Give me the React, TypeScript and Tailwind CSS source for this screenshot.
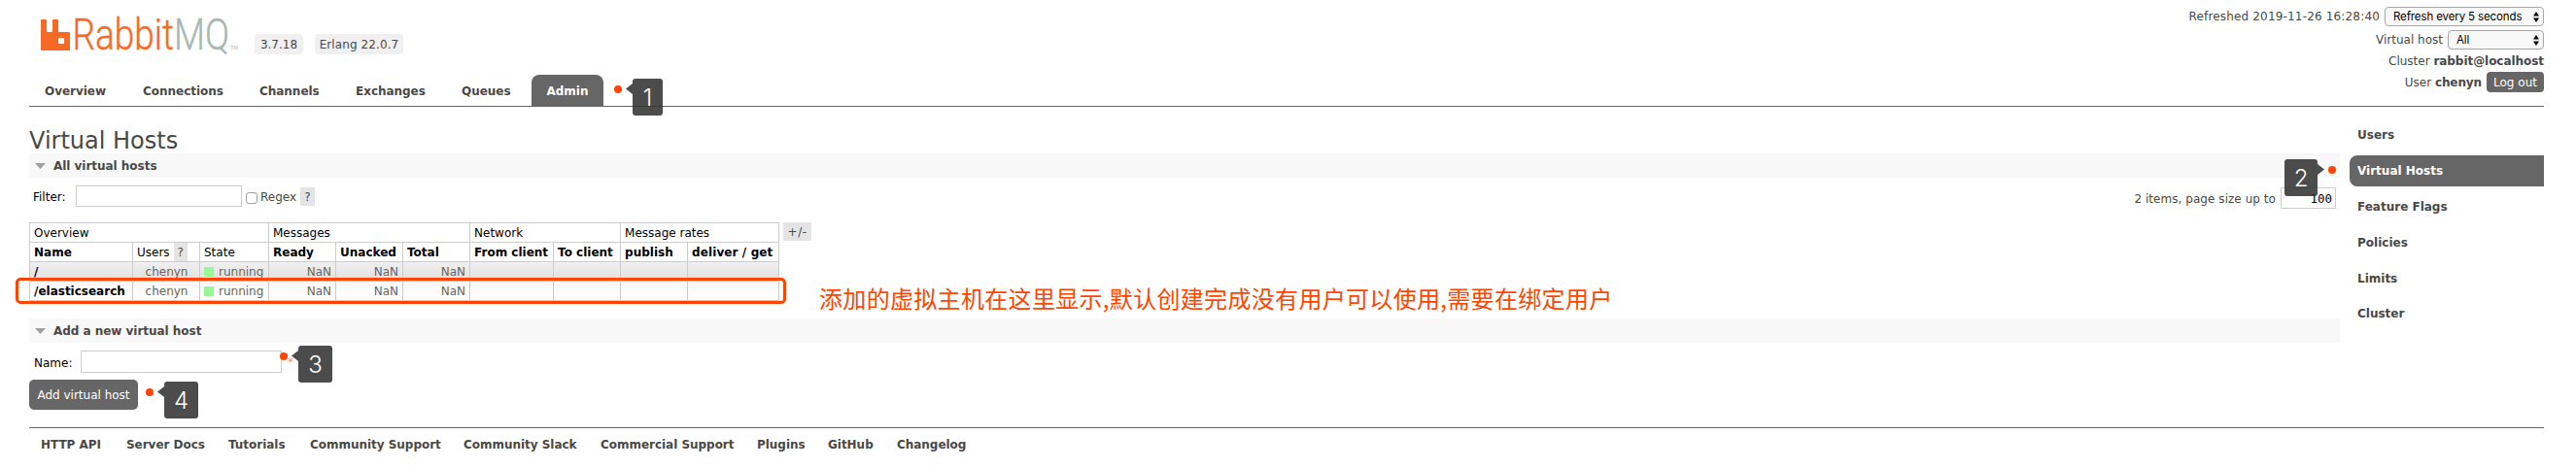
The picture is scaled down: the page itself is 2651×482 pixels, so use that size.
import React from "react";

const bold = "font-bold tracking-[-0.03px] text-[#484848]";

const tabs: [string, string][] = [
  ["Overview", "w-[63px]"],
  ["Connections", "w-[82px]"],
  ["Channels", "w-[61px]"],
  ["Exchanges", "w-[71px]"],
  ["Queues", "w-[50px]"],
];

const side = ["Users", "Virtual Hosts", "Feature Flags", "Policies", "Limits", "Cluster"];

const footer: [string, string][] = [
  ["HTTP API", "w-[88px]"],
  ["Server Docs", "w-[105px]"],
  ["Tutorials", "w-[84px]"],
  ["Community Support", "w-[158px]"],
  ["Community Slack", "w-[141px]"],
  ["Commercial Support", "w-[161px]"],
  ["Plugins", "w-[73px]"],
  ["GitHub", "w-[71px]"],
  ["Changelog", "w-[80px]"],
];

function Logo() {
  return (
    <svg className="block h-[40px] w-[210px] overflow-visible" viewBox="0 0 210 40">
      <path
        d="M1 4h4q1 0 1 1v11q0 1 1 1h4q1 0 1-1V5q0-1 1-1h4q1 0 1 1v11q0 1 1 1h10q1 0 1 1v17q0 1-1 1H1q-1 0-1-1V5q0-1 1-1zM19 23q-1 0-1 1v4q0 1 1 1h4q1 0 1-1v-4q0-1-1-1z"
        fill="#f66a26"
        fillRule="evenodd"
      />
      <text x="32.5" y="35.2" fontFamily="Roboto, sans-serif" fontWeight="300" fontSize="45" strokeWidth="0.4" textLength="161.5" lengthAdjust="spacingAndGlyphs">
        <tspan fill="#f66a26" stroke="#f66a26">Rabbit</tspan>
        <tspan fill="#a9b7b1" stroke="#a9b7b1">MQ</tspan>
      </text>
      <text x="195" y="35" fontSize="5.5" fill="#a9b7b1" fontFamily="Liberation Sans, sans-serif">TM</text>
    </svg>
  );
}

function Select({ label, width }: { label: string; width: string }) {
  return (
    <span className={`flex h-[20px] items-center justify-between rounded-[4px] border border-[#a6a6a6] bg-[#f8f8f8] pr-[4px] pl-[8px] font-[Inter,sans-serif] text-[11.5px] tracking-[-0.12px] text-black ${width}`}>
      {label}
      <svg className="h-[11px] w-[6px]" viewBox="0 0 6 11">
        <path d="M3 0l3 4.5H0zM3 11L0 6.5h6z" fill="#000" />
      </svg>
    </span>
  );
}

function Section({ title }: { title: string }) {
  return (
    <div className={`flex h-[25px] items-center bg-[#f8f8f8] pl-[6px] ${bold}`}>
      <svg className="mr-[8px] h-[6px] w-[11px]" viewBox="0 0 11 6">
        <path d="M0 0h11L5.5 6z" fill="#a0a0a0" />
      </svg>
      {title}
    </div>
  );
}

function Callout({ n, pos, dot, flip }: { n: string; pos: string; dot: string; flip?: boolean }) {
  return (
    <>
      <i className={`absolute h-[8px] w-[8px] rounded-full bg-[#ff4500] ${dot}`} />
      <div className={`absolute flex h-[38px] items-center justify-center rounded-[3px] bg-[#333]/88 pt-px font-[Inter,sans-serif] text-[24px] font-light text-white ${pos}`}>
        {n}
        <svg className={`absolute top-[5px] h-[11px] w-[7px] ${flip ? "-right-[7px] -scale-x-100" : "-left-[7px]"}`} viewBox="0 0 7 11">
          <path d="M7 0v11L0 5.5z" fill="#333" fillOpacity=".88" />
        </svg>
      </div>
    </>
  );
}

const cell = "border border-[#ccc] px-[4px] py-0 h-[20px] whitespace-nowrap overflow-hidden";

function Row({ name, tone }: { name: string; tone: string }) {
  return (
    <tr className={`text-[#666] ${tone}`}>
      <td className={`${cell} font-bold text-black`}>{name}</td>
      <td className={`${cell} text-center`}><span className="pl-[1px]">chenyn</span></td>
      <td className={cell}>
        <span className="flex items-center">
          <i className="mr-[5px] h-[10px] w-[10px] bg-[#98f898]" />
          running
        </span>
      </td>
      <td className={`${cell} text-right`}>NaN</td>
      <td className={`${cell} text-right`}>NaN</td>
      <td className={`${cell} text-right`}>NaN</td>
      <td className={cell} />
      <td className={cell} />
      <td className={cell} />
      <td className={cell} />
    </tr>
  );
}

export default function App() {
  return (
    <div className="relative h-[482px] w-[2651px] overflow-hidden bg-white font-[DejaVu_Sans,Verdana,sans-serif] text-[12px] leading-[16px] whitespace-nowrap text-[#484848]">
      <header className="mr-[33px] ml-[30px] flex h-[110px] justify-between border-b border-[#666]">
        <div className="flex flex-col justify-between">
          <div className="flex pt-[16px] pl-[12px]">
            <Logo />
            <span className="mt-[19px] ml-[10px] flex h-[21px] w-[50px] items-center justify-center rounded-[4px] bg-[#f0f0f0]">3.7.18</span>
            <span className="mt-[19px] ml-[12px] flex h-[21px] w-[91px] items-center justify-center rounded-[4px] bg-[#f0f0f0] tracking-[0.1px]">Erlang 22.0.7</span>
          </div>
          <nav className={`flex h-[32px] gap-[6px] ${bold}`}>
            {tabs.map(([t, w]) => (
              <span key={t} className="px-[16px] pt-[9px]">
                <span className={`block ${w}`}>{t}</span>
              </span>
            ))}
            <span className="w-[74px] rounded-t-[8px] bg-[#666] pt-[9px] text-center text-white">Admin</span>
          </nav>
        </div>
        <div className="flex flex-col items-end pt-[7px]">
          <div className="flex items-center gap-[5px]"><span className="tracking-[0.17px]">Refreshed 2019-11-26 16:28:40</span><Select label="Refresh every 5 seconds" width="w-[164px]" /></div>
          <div className="mt-[4px] flex items-center gap-[5px]">Virtual host<Select label="All" width="w-[99px]" /></div>
          <div className="mt-[4px]">Cluster <b className="tracking-[-0.05px]">rabbit@localhost</b></div>
          <div className="mt-[3px] flex items-center">
            User&nbsp;<b className="tracking-[-0.1px]">chenyn</b>
            <span className="ml-[5px] flex h-[21px] w-[59px] items-center justify-center rounded-[4px] bg-[#666] text-white">Log out</span>
          </div>
        </div>
      </header>

      <div className="mr-[33px] ml-[30px] flex h-[330px] justify-between">
        <main className="w-[2378px]">
          <h1 className="flex h-[48px] items-end text-[24px] leading-[26px]">Virtual Hosts</h1>
          <Section title="All virtual hosts" />
          <div className="flex h-[46px] items-start justify-between">
            <div className="flex items-center pt-[8px] pl-[4px]">
              <span className="mt-[2px] w-[44px] text-black">Filter:</span>
              <span className="h-[22px] w-[171px] border border-[#ccc]" />
              <span className="mt-[3px] ml-[4px] h-[12px] w-[12px] rounded-[3px] border border-[#a0a0a0]" />
              <span className="mt-[2px] ml-[3px] w-[41px]">Regex</span>
              <span className="mt-px flex h-[19px] w-[15px] items-center justify-center bg-[#e4e4e4]">?</span>
            </div>
            <div className="mr-[4px] flex items-center pt-[10px]">
              <span className="mt-[2px] tracking-[0.05px]">2 items, page size up to</span>
              <span className="ml-[5px] flex h-[22px] w-[57px] items-center justify-end border border-[#ccc] pt-[2px] pr-[3px] font-[DejaVu_Sans_Mono,monospace] text-[12.5px] text-black">100</span>
            </div>
          </div>
          <div className="flex h-[99px] items-start">
            <table className="w-[772px] table-fixed border-collapse text-black">
              <colgroup>
                <col className="w-[106px]" />
                <col className="w-[69px]" />
                <col className="w-[71px]" />
                <col className="w-[69px]" />
                <col className="w-[69px]" />
                <col className="w-[69px]" />
                <col className="w-[86px]" />
                <col className="w-[69px]" />
                <col className="w-[69px]" />
                <col className="w-[94px]" />
              </colgroup>
              <tbody>
                <tr>
                  <td className={cell} colSpan={3}>Overview</td>
                  <td className={cell} colSpan={3}>Messages</td>
                  <td className={cell} colSpan={2}>Network</td>
                  <td className={cell} colSpan={2}>Message rates</td>
                </tr>
                <tr>
                  <td className={`${cell} font-bold`}>Name</td>
                  <td className={cell}>
                    <span className="flex items-center">Users<i className="-my-px ml-[4px] flex h-[19px] w-[14px] items-center justify-center bg-[#e4e4e4] text-[#484848] not-italic">?</i></span>
                  </td>
                  <td className={cell}>State</td>
                  <td className={`${cell} font-bold`}>Ready</td>
                  <td className={`${cell} font-bold`}>Unacked</td>
                  <td className={`${cell} font-bold`}>Total</td>
                  <td className={`${cell} font-bold`}>From client</td>
                  <td className={`${cell} font-bold`}>To client</td>
                  <td className={`${cell} font-bold`}>publish</td>
                  <td className={`${cell} font-bold tracking-[0.1px]`}>deliver / get</td>
                </tr>
                <Row name="/" tone="bg-linear-to-b from-[#f0f0f0] to-[#dfdfdf]" />
                <Row name="/elasticsearch" tone="bg-linear-to-b from-[#f8f8f8] to-white" />
              </tbody>
            </table>
            <span className="ml-[4px] flex h-[19px] w-[29px] items-center justify-center bg-[#e4e4e4] tracking-[0.5px]">+/-</span>
          </div>
          <Section title="Add a new virtual host" />
          <div className="flex items-center pt-[8px] pl-[5px]">
            <span className="mt-[3px] w-[48px] text-black">Name:</span>
            <span className="h-[23px] w-[207px] border border-[#ccc]" />
            <span className="ml-[6px] text-[#ff8a8a]">*</span>
          </div>
          <div className="mt-[7px] flex h-[31px] w-[112px] items-center justify-center rounded-[5px] bg-[#666] text-white">Add virtual host</div>
        </main>
        <aside className="flex w-[200px] flex-col gap-[5px] pt-[13px]">
          {side.map((s) => (
            <span key={s} className={`flex h-[32px] items-center rounded-l-[8px] pl-[8px] font-bold last:-mt-px ${s === "Virtual Hosts" ? "bg-[#666] text-white" : ""}`}>{s}</span>
          ))}
        </aside>
      </div>

      <footer className={`mr-[33px] ml-[30px] flex border-t border-[#666] pt-[9px] pl-[12px] ${bold}`}>
        {footer.map(([t, w]) => (
          <span key={t} className={w}>{t}</span>
        ))}
      </footer>

      <Callout n="1" dot="left-[632px] top-[88px]" pos="left-[651px] top-[81px] w-[31px]" />
      <Callout n="2" dot="left-[2396px] top-[171px]" pos="left-[2351px] top-[164px] w-[34px]" flip />
      <Callout n="3" dot="left-[288px] top-[363px]" pos="left-[307px] top-[356px] w-[35px]" />
      <Callout n="4" dot="left-[150px] top-[400px]" pos="left-[169px] top-[393px] w-[35px]" />
      <div className="absolute top-[286px] left-[16px] h-[27px] w-[793px] rounded-[5px] border-3 border-[#ff4500]" />
      <p className="absolute top-[291px] left-[843px] font-[Noto_Sans_CJK_SC,sans-serif] text-[24px] leading-[32px] tracking-[0.32px] text-[#ff4500]">
        添加的虚拟主机在这里显示,默认创建完成没有用户可以使用,需要在绑定用户
      </p>
    </div>
  );
}
